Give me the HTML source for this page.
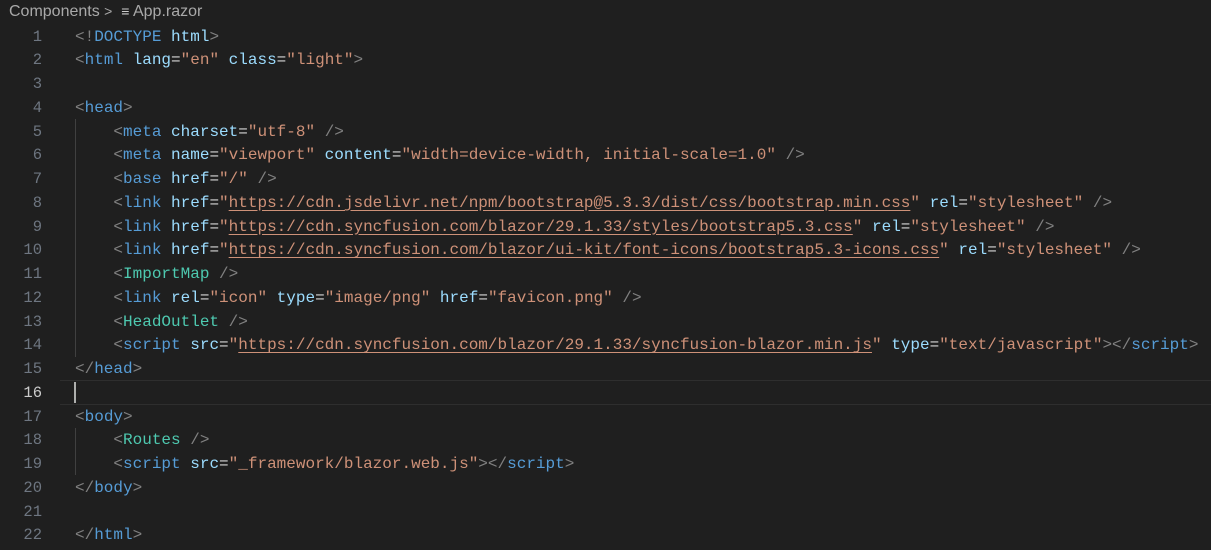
<!DOCTYPE html>
<html><head><style>
body{margin:0;width:1211px;height:550px;background:#1f1f1f;overflow:hidden;font-family:"Liberation Mono",monospace;}
.bc{position:absolute;left:9px;top:3px;font:16px "Liberation Sans",sans-serif;color:#a9a9a9;white-space:nowrap}
.ln{position:absolute;left:0;width:42px;text-align:right;color:#6e7681;font-size:15.5px}
.code{position:absolute;left:75px;white-space:pre;font-size:16px;color:#d4d4d4}
.row{position:absolute;left:0;height:23.76px;line-height:23.76px}
.p{color:#808080}.t{color:#569cd6}.a{color:#9cdcfe}.s{color:#ce9178}.c{color:#4ec9b0}.u{color:#ce9178;text-decoration:underline;text-underline-offset:3px}
.guide{position:absolute;left:75px;width:1px;background:#404040}
.cur{position:absolute;left:60px;right:0;top:380px;height:23px;border-top:1px solid #2e2e2e;border-bottom:1px solid #2e2e2e}
</style></head><body>
<div class="bc">Components <span style="font-size:14px">&gt;</span> &nbsp;<span style="color:#ccc;font-size:14px">&#8801;</span> App.razor</div>
<div class="cur"></div>
<div style="position:absolute;left:74px;top:382px;width:2px;height:21px;background:#aeafad"></div>
<div class="guide" style="top:119px;height:238px"></div>
<div class="guide" style="top:428px;height:47px"></div>
<div id="g"></div>
<script>
var lines=[
'<span class="p">&lt;!</span><span class="t">DOCTYPE</span> <span class="a">html</span><span class="p">&gt;</span>',
'<span class="p">&lt;</span><span class="t">html</span> <span class="a">lang</span>=<span class="s">"en"</span> <span class="a">class</span>=<span class="s">"light"</span><span class="p">&gt;</span>',
'',
'<span class="p">&lt;</span><span class="t">head</span><span class="p">&gt;</span>',
'    <span class="p">&lt;</span><span class="t">meta</span> <span class="a">charset</span>=<span class="s">"utf-8"</span> <span class="p">/&gt;</span>',
'    <span class="p">&lt;</span><span class="t">meta</span> <span class="a">name</span>=<span class="s">"viewport"</span> <span class="a">content</span>=<span class="s">"width=device-width, initial-scale=1.0"</span> <span class="p">/&gt;</span>',
'    <span class="p">&lt;</span><span class="t">base</span> <span class="a">href</span>=<span class="s">"/"</span> <span class="p">/&gt;</span>',
'    <span class="p">&lt;</span><span class="t">link</span> <span class="a">href</span>=<span class="s">"<span class="u">https://cdn.jsdelivr.net/npm/bootstrap@5.3.3/dist/css/bootstrap.min.css</span>"</span> <span class="a">rel</span>=<span class="s">"stylesheet"</span> <span class="p">/&gt;</span>',
'    <span class="p">&lt;</span><span class="t">link</span> <span class="a">href</span>=<span class="s">"<span class="u">https://cdn.syncfusion.com/blazor/29.1.33/styles/bootstrap5.3.css</span>"</span> <span class="a">rel</span>=<span class="s">"stylesheet"</span> <span class="p">/&gt;</span>',
'    <span class="p">&lt;</span><span class="t">link</span> <span class="a">href</span>=<span class="s">"<span class="u">https://cdn.syncfusion.com/blazor/ui-kit/font-icons/bootstrap5.3-icons.css</span>"</span> <span class="a">rel</span>=<span class="s">"stylesheet"</span> <span class="p">/&gt;</span>',
'    <span class="p">&lt;</span><span class="c">ImportMap</span> <span class="p">/&gt;</span>',
'    <span class="p">&lt;</span><span class="t">link</span> <span class="a">rel</span>=<span class="s">"icon"</span> <span class="a">type</span>=<span class="s">"image/png"</span> <span class="a">href</span>=<span class="s">"favicon.png"</span> <span class="p">/&gt;</span>',
'    <span class="p">&lt;</span><span class="c">HeadOutlet</span> <span class="p">/&gt;</span>',
'    <span class="p">&lt;</span><span class="t">script</span> <span class="a">src</span>=<span class="s">"<span class="u">https://cdn.syncfusion.com/blazor/29.1.33/syncfusion-blazor.min.js</span>"</span> <span class="a">type</span>=<span class="s">"text/javascript"</span><span class="p">&gt;&lt;/</span><span class="t">script</span><span class="p">&gt;</span>',
'<span class="p">&lt;/</span><span class="t">head</span><span class="p">&gt;</span>',
'',
'<span class="p">&lt;</span><span class="t">body</span><span class="p">&gt;</span>',
'    <span class="p">&lt;</span><span class="c">Routes</span> <span class="p">/&gt;</span>',
'    <span class="p">&lt;</span><span class="t">script</span> <span class="a">src</span>=<span class="s">"_framework/blazor.web.js"</span><span class="p">&gt;&lt;/</span><span class="t">script</span><span class="p">&gt;</span>',
'<span class="p">&lt;/</span><span class="t">body</span><span class="p">&gt;</span>',
'',
'<span class="p">&lt;/</span><span class="t">html</span><span class="p">&gt;</span>'];
var h='';
for(var i=0;i<lines.length;i++){var y=25.5+i*23.76;
h+='<div class="row ln" style="top:'+y+'px'+(i==15?';color:#ccc':'')+'">'+(i+1)+'</div>';
h+='<div class="row code" style="left:75px;top:'+y+'px">'+lines[i]+'</div>';}
document.getElementById('g').innerHTML=h;
</script>
</body></html>
